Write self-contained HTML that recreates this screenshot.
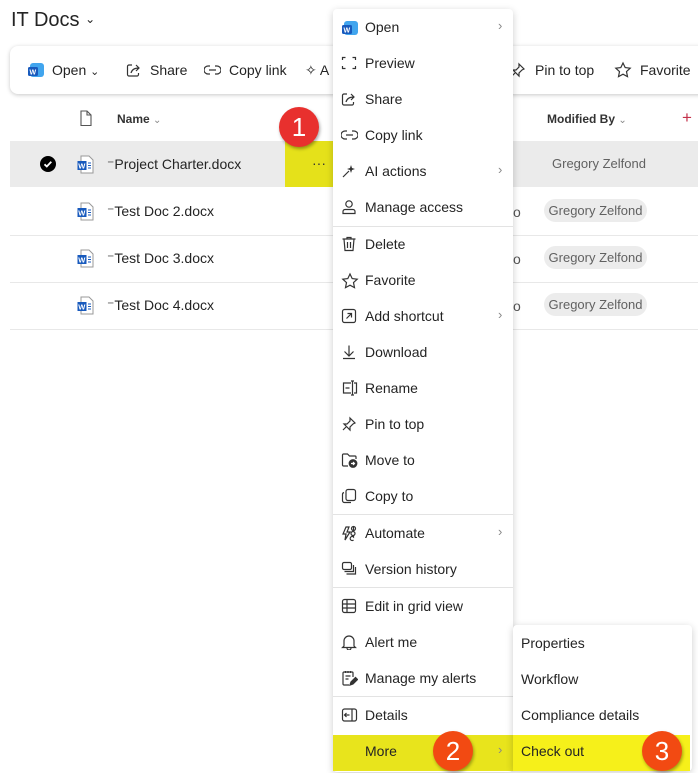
<!DOCTYPE html>
<html><head><meta charset="utf-8">
<style>
*{margin:0;padding:0;box-sizing:border-box}
body{width:698px;height:773px;overflow:hidden;background:#fff;font-family:"Segoe UI","Liberation Sans",sans-serif;color:#242424;position:relative}
.a{position:absolute}
.t{font-size:14px;white-space:nowrap}
.mi{position:absolute;left:333px;width:180px;height:36px}
.mi svg{position:absolute;left:8px;top:10px}
.mi span{position:absolute;left:32px;top:10px;font-size:14px;color:#242424;white-space:nowrap}
.mi .ch{left:165px;top:9px;color:#888;font-size:13px}
.sep{position:absolute;left:333px;width:180px;height:1px;background:#e3e3e3}
.si{position:absolute;left:513px;width:179px;height:36px}
.si span{position:absolute;left:8px;top:10px;font-size:14px;white-space:nowrap}
.badge{position:absolute;width:40px;height:40px;border-radius:50%;color:#fff;font-size:26px;text-align:center;line-height:40px;font-family:"Liberation Sans",sans-serif;box-shadow:1px 2px 3px rgba(0,0,0,.35)}
.wd{position:absolute;width:17px;height:19px}
.pill{position:absolute;left:544px;width:103px;height:23px;border-radius:12px;background:#ececec;color:#616161;font-size:13px;line-height:23px;text-align:center}
.row{position:absolute;left:10px;width:688px;height:1px;background:#e8e8e8}
</style></head><body>

<div class="a" style="left:11px;top:9px;font-size:20px;color:#242424">IT Docs <span style="font-size:12px;vertical-align:3px">&#8964;</span></div>

<div class="a" style="left:10px;top:46px;width:700px;height:48px;border-radius:8px;background:#fff;box-shadow:0 1px 4px rgba(0,0,0,.22)"></div>
<svg class="a" style="left:27px;top:61px" width="18" height="18" viewBox="0 0 18 18"><rect x="3" y="2" width="14" height="14" rx="3" fill="#41a5ee"/><rect x="1" y="6" width="10" height="9" rx="1.5" fill="#185abd"/><text x="2.5" y="13.5" font-size="7" fill="#fff" font-family="Liberation Sans" font-weight="bold">W</text></svg>
<div class="a t" style="left:52px;top:62px">Open <span style="font-size:11px">&#8964;</span></div>
<svg class="a" style="left:126px;top:62px" width="16" height="16" viewBox="0 0 16 16" fill="none" stroke="#333" stroke-width="1.2"><path d="M6 3H3a1.5 1.5 0 0 0-1.5 1.5v8A1.5 1.5 0 0 0 3 14h8a1.5 1.5 0 0 0 1.5-1.5V11"/><path d="M5 11c1-4 4-5 8-5M10 3l3 3-3 3"/></svg>
<div class="a t" style="left:150px;top:62px">Share</div>
<svg class="a" style="left:204px;top:63px" width="17" height="14" viewBox="0 0 17 14" fill="none" stroke="#333" stroke-width="1.2"><path d="M6 3H4a4 4 0 0 0 0 8h2M11 3h2a4 4 0 0 1 0 8h-2M5 7h7"/></svg>
<div class="a t" style="left:229px;top:62px">Copy link</div>
<div class="a t" style="left:305px;top:62px">&#10023; A</div>
<svg class="a" style="left:510px;top:62px" width="16" height="16" viewBox="0 0 16 16" fill="none" stroke="#333" stroke-width="1.2"><path d="M9 2l5 5-2 1-3 3 0 3-6-6 3 0 3-3zM5 11l-3 3"/></svg>
<div class="a t" style="left:535px;top:62px">Pin to top</div>
<svg class="a" style="left:614px;top:61px" width="18" height="18" viewBox="0 0 18 18" fill="none" stroke="#333" stroke-width="1.2"><path d="M9 2l2.2 4.6 5 .6-3.7 3.4 1 5L9 13.2 4.5 15.6l1-5L1.8 7.2l5-.6z"/></svg>
<div class="a t" style="left:640px;top:62px">Favorite</div>

<svg class="a" style="left:79px;top:110px" width="14" height="17" viewBox="0 0 14 17" fill="none" stroke="#555" stroke-width="1.1"><path d="M2 1h6l4 4v10.5H2z"/><path d="M8 1v4h4"/></svg>
<div class="a" style="left:117px;top:112px;font-size:12px;font-weight:bold;color:#333">Name <span style="font-weight:normal;color:#888;font-size:10px">&#8964;</span></div>
<div class="a" style="left:547px;top:112px;font-size:12px;font-weight:bold;color:#333">Modified By <span style="font-weight:normal;color:#888;font-size:10px">&#8964;</span></div>
<div class="a" style="left:682px;top:108px;font-size:17px;color:#c4314b">+</div>

<div class="a" style="left:10px;top:141px;width:688px;height:46px;background:#ebebeb"></div>
<div class="a" style="left:285px;top:141px;width:48px;height:46px;background:#e5e11a"></div>
<div class="a" style="left:312px;top:155px;font-size:14px;color:#333">···</div>
<div class="row" style="top:235px"></div><div class="row" style="top:282px"></div><div class="row" style="top:329px"></div>

<div class="a" style="left:40px;top:156px;width:16px;height:16px;border-radius:50%;background:#000"></div>
<svg class="a" style="left:40px;top:156px" width="16" height="16"><path d="M4.5 8.3l2.3 2.2 4.5-4.8" stroke="#fff" stroke-width="1.8" fill="none"/></svg>

<svg class="wd" style="left:77px;top:155px" viewBox="0 0 17 19"><path d="M4 1h8l4 4v13H4z" fill="#fff" stroke="#999"/><rect x="0.5" y="6" width="9" height="9" fill="#185abd"/><text x="1.3" y="13.5" font-size="7.5" fill="#fff" font-family="Liberation Sans" font-weight="bold">W</text><path d="M11 8h3M11 10.5h3M11 13h3" stroke="#185abd"/></svg>
<svg class="wd" style="left:77px;top:202px" viewBox="0 0 17 19"><path d="M4 1h8l4 4v13H4z" fill="#fff" stroke="#999"/><rect x="0.5" y="6" width="9" height="9" fill="#185abd"/><text x="1.3" y="13.5" font-size="7.5" fill="#fff" font-family="Liberation Sans" font-weight="bold">W</text><path d="M11 8h3M11 10.5h3M11 13h3" stroke="#185abd"/></svg>
<svg class="wd" style="left:77px;top:249px" viewBox="0 0 17 19"><path d="M4 1h8l4 4v13H4z" fill="#fff" stroke="#999"/><rect x="0.5" y="6" width="9" height="9" fill="#185abd"/><text x="1.3" y="13.5" font-size="7.5" fill="#fff" font-family="Liberation Sans" font-weight="bold">W</text><path d="M11 8h3M11 10.5h3M11 13h3" stroke="#185abd"/></svg>
<svg class="wd" style="left:77px;top:296px" viewBox="0 0 17 19"><path d="M4 1h8l4 4v13H4z" fill="#fff" stroke="#999"/><rect x="0.5" y="6" width="9" height="9" fill="#185abd"/><text x="1.3" y="13.5" font-size="7.5" fill="#fff" font-family="Liberation Sans" font-weight="bold">W</text><path d="M11 8h3M11 10.5h3M11 13h3" stroke="#185abd"/></svg>

<div class="a t" style="left:107px;top:156px">&#8315;Project Charter.docx</div>
<div class="a t" style="left:107px;top:203px">&#8315;Test Doc 2.docx</div>
<div class="a t" style="left:107px;top:250px">&#8315;Test Doc 3.docx</div>
<div class="a t" style="left:107px;top:297px">&#8315;Test Doc 4.docx</div>

<div class="a" style="left:552px;top:156px;font-size:13px;color:#616161">Gregory Zelfond</div>
<div class="pill" style="top:199px">Gregory Zelfond</div>
<div class="pill" style="top:246px">Gregory Zelfond</div>
<div class="pill" style="top:293px">Gregory Zelfond</div>
<div class="a t" style="left:513px;top:204px;color:#555">o</div>
<div class="a t" style="left:513px;top:251px;color:#555">o</div>
<div class="a t" style="left:513px;top:298px;color:#555">o</div>

<div class="a" style="left:333px;top:9px;width:180px;height:763px;background:#fff;box-shadow:0 2px 8px rgba(0,0,0,.2);border-radius:4px"></div>
<div class="a" style="left:333px;top:735px;width:180px;height:36px;background:#e8e41c"></div>

<div class="mi" style="top:9px"><svg width="18" height="18" viewBox="0 0 18 18"><rect x="3" y="2" width="14" height="14" rx="3" fill="#41a5ee"/><rect x="1" y="6" width="10" height="9" rx="1.5" fill="#185abd"/><text x="2.5" y="13.5" font-size="7" fill="#fff" font-family="Liberation Sans" font-weight="bold">W</text></svg><span>Open</span><span class="ch">&#8250;</span></div>
<div class="mi" style="top:45px"><svg width="16" height="16" viewBox="0 0 16 16" fill="none" stroke="#333" stroke-width="1.2"><path d="M1.5 5V2.5h3M11.5 2.5h3V5M14.5 11v2.5h-3M4.5 13.5h-3V11"/></svg><span>Preview</span></div>
<div class="mi" style="top:81px"><svg width="16" height="16" viewBox="0 0 16 16" fill="none" stroke="#333" stroke-width="1.2"><path d="M6 3H3a1.5 1.5 0 0 0-1.5 1.5v8A1.5 1.5 0 0 0 3 14h8a1.5 1.5 0 0 0 1.5-1.5V11"/><path d="M5 11c1-4 4-5 8-5M10 3l3 3-3 3"/></svg><span>Share</span></div>
<div class="mi" style="top:117px"><svg width="17" height="16" viewBox="0 0 17 16" fill="none" stroke="#333" stroke-width="1.2"><path d="M6 4H4a4 4 0 0 0 0 8h2M11 4h2a4 4 0 0 1 0 8h-2M5 8h7"/></svg><span>Copy link</span></div>
<div class="mi" style="top:153px"><svg width="16" height="16" viewBox="0 0 16 16" fill="#333"><path d="M10 2l1 3 3 1-3 1-1 3-1-3-3-1 3-1z"/><path d="M2 14l6-6" stroke="#333" stroke-width="1.2"/></svg><span>AI actions</span><span class="ch">&#8250;</span></div>
<div class="mi" style="top:189px"><svg width="16" height="16" viewBox="0 0 16 16" fill="none" stroke="#333" stroke-width="1.2"><circle cx="8" cy="5" r="3.2"/><path d="M2 14.5v-2a2 2 0 0 1 2-2h8a2 2 0 0 1 2 2v2z"/></svg><span>Manage access</span></div>
<div class="sep" style="top:226px"></div>
<div class="mi" style="top:226px"><svg width="16" height="16" viewBox="0 0 16 16" fill="none" stroke="#333" stroke-width="1.2"><path d="M1.5 3h13M3 3l1 11.5h8L13 3M6.5 6v6M9.5 6v6M6 3V1.5h4V3"/></svg><span>Delete</span></div>
<div class="mi" style="top:262px"><svg width="18" height="18" viewBox="0 0 18 18" fill="none" stroke="#333" stroke-width="1.2"><path d="M9 2l2.2 4.6 5 .6-3.7 3.4 1 5L9 13.2 4.5 15.6l1-5L1.8 7.2l5-.6z"/></svg><span>Favorite</span></div>
<div class="mi" style="top:298px"><svg width="16" height="16" viewBox="0 0 16 16" fill="none" stroke="#333" stroke-width="1.2"><rect x="1.5" y="1.5" width="13" height="13" rx="2"/><path d="M5.5 10.5l5-5M6.5 5.5h4v4"/></svg><span>Add shortcut</span><span class="ch">&#8250;</span></div>
<div class="mi" style="top:334px"><svg width="16" height="16" viewBox="0 0 16 16" fill="none" stroke="#333" stroke-width="1.2"><path d="M8 1.5v10M3.5 7.5l4.5 4.5 4.5-4.5M2 14.5h12"/></svg><span>Download</span></div>
<div class="mi" style="top:370px"><svg width="18" height="16" viewBox="0 0 18 16" fill="none" stroke="#333" stroke-width="1.2"><path d="M10 3H2.5v10H10M13 3h2.5v10H13M11.5 1v14M10 1h3M10 15h3M4.5 8h4"/></svg><span>Rename</span></div>
<div class="mi" style="top:406px"><svg width="16" height="16" viewBox="0 0 16 16" fill="none" stroke="#333" stroke-width="1.2"><path d="M9 2l5 5-2 1-3 3 0 3-6-6 3 0 3-3zM5 11l-3 3"/></svg><span>Pin to top</span></div>
<div class="mi" style="top:442px"><svg width="17" height="16" viewBox="0 0 17 16" fill="none" stroke="#333" stroke-width="1.2"><path d="M7 14H2.5a1 1 0 0 1-1-1V3a1 1 0 0 1 1-1h4l2 2h5.5a1 1 0 0 1 1 1v2"/><circle cx="12" cy="11.5" r="3.8" fill="#333"/><path d="M10 11.5h3.5M12 10l1.5 1.5L12 13" stroke="#fff"/></svg><span>Move to</span></div>
<div class="mi" style="top:478px"><svg width="16" height="16" viewBox="0 0 16 16" fill="none" stroke="#333" stroke-width="1.2"><rect x="5" y="1.5" width="9.5" height="11" rx="2"/><path d="M3 4.5a2 2 0 0 0-1.5 2v6a2 2 0 0 0 2 2H10"/></svg><span>Copy to</span></div>
<div class="sep" style="top:514px"></div>
<div class="mi" style="top:515px"><svg width="17" height="17" viewBox="0 0 17 17" fill="none" stroke="#333" stroke-width="1.2"><path d="M5 2l-3 7h3l-1 6 5-8H6l2-5zM12.5 1.5v4M10 8.5a2 2 0 1 0 4 0 2 2 0 0 0-4 0M12.5 10.5v1.5a2 2 0 1 0 0 3"/><circle cx="12.5" cy="3.5" r="2"/></svg><span>Automate</span><span class="ch">&#8250;</span></div>
<div class="mi" style="top:551px"><svg width="17" height="16" viewBox="0 0 17 16" fill="none" stroke="#333" stroke-width="1.2"><rect x="1.5" y="1.5" width="9" height="7" rx="1.5"/><path d="M3.5 10.5h9V4M5.5 13h9V6"/></svg><span>Version history</span></div>
<div class="sep" style="top:587px"></div>
<div class="mi" style="top:588px"><svg width="16" height="16" viewBox="0 0 16 16" fill="none" stroke="#333" stroke-width="1.2"><rect x="1.5" y="1.5" width="13" height="13" rx="2"/><path d="M1.5 6h13M1.5 10h13M6 1.5v13"/></svg><span>Edit in grid view</span></div>
<div class="mi" style="top:624px"><svg width="16" height="16" viewBox="0 0 16 16" fill="none" stroke="#333" stroke-width="1.2"><path d="M3 12V7a5 5 0 0 1 10 0v5l1.5 1.5h-13zM6 14a2 2 0 0 0 4 0"/></svg><span>Alert me</span></div>
<div class="mi" style="top:660px"><svg width="17" height="17" viewBox="0 0 17 17" fill="none" stroke="#333" stroke-width="1.2"><path d="M8 15H3a1 1 0 0 1-1-1V3a1 1 0 0 1 1-1h8a1 1 0 0 1 1 1v4M4.5 1v2M7 1v2M9.5 1v2M4.5 6h5M4.5 9h3"/><path d="M9 15l1-3 4.5-4.5 2 2L12 14z" fill="#333"/></svg><span>Manage my alerts</span></div>
<div class="sep" style="top:696px"></div>
<div class="mi" style="top:697px"><svg width="17" height="16" viewBox="0 0 17 16" fill="none" stroke="#333" stroke-width="1.2"><rect x="1.5" y="2" width="14" height="12" rx="2"/><path d="M11 2v12M8.5 8h-5M5.5 6l-2 2 2 2"/></svg><span>Details</span></div>
<div class="mi" style="top:733px"><span>More</span><span class="ch">&#8250;</span></div>

<div class="a" style="left:513px;top:625px;width:179px;height:146px;background:#fff;box-shadow:0 2px 8px rgba(0,0,0,.2);border-radius:4px"></div>
<div class="a" style="left:513px;top:735px;width:177px;height:36px;background:#f6f01a"></div>
<div class="si" style="top:625px"><span>Properties</span></div>
<div class="si" style="top:661px"><span>Workflow</span></div>
<div class="si" style="top:697px"><span>Compliance details</span></div>
<div class="si" style="top:733px"><span>Check out</span></div>

<div class="badge" style="left:279px;top:107px;background:#e8302e">1</div>
<div class="badge" style="left:433px;top:731px;background:#f24a12">2</div>
<div class="badge" style="left:642px;top:731px;background:#f24a12">3</div>

</body></html>
